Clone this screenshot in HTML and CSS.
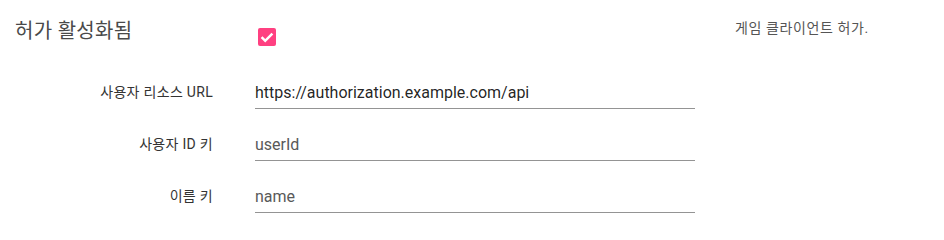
FILE: index.html
```html
<!DOCTYPE html>
<html lang="ko">
<head>
<meta charset="utf-8">
<link rel="stylesheet" href="styles.css">
</head>
<body>
<div class="form">
  <div class="row head">
    <div class="title">허가 활성화됨</div>
    <div class="cell">
      <span class="checkbox">
        <svg viewBox="0 0 18 18" width="18" height="18"><path d="M3.6 9.2 L7.2 12.8 L14.4 5.6" fill="none" stroke="#fff" stroke-width="2.5"/></svg>
      </span>
    </div>
    <div class="desc">게임 클라이언트 허가.</div>
  </div>
  <div class="row field">
    <label class="label">사용자 리소스 URL</label>
    <div class="cell"><div class="input">https://authorization.example.com/api</div></div>
  </div>
  <div class="row field">
    <label class="label">사용자 ID 키</label>
    <div class="cell"><div class="input muted">userId</div></div>
  </div>
  <div class="row field">
    <label class="label">이름 키</label>
    <div class="cell"><div class="input muted">name</div></div>
  </div>
</div>
</body>
</html>
```
FILE: styles.css
```css
html, body {
  margin: 0;
  padding: 0;
  background: #fff;
}
body {
  font-family: Roboto, "Noto Sans CJK KR", sans-serif;
  color: rgba(0, 0, 0, 0.87);
}
.form {
  padding-left: 15px;
}
.row {
  display: grid;
  grid-template-columns: 240px 480px 1fr;
}
.head {
  height: 57px;
}
.title {
  font-size: 20px;
  line-height: 26px;
  margin-top: 18px;
  letter-spacing: 0.3px;
  color: #4a4a4a;
}
.head .cell {
  padding-left: 3px;
  padding-top: 28px;
}
.checkbox {
  display: block;
  width: 18px;
  height: 18px;
  border-radius: 2px;
  background: #ff4081;
}
.checkbox svg {
  display: block;
}
.desc {
  font-size: 14px;
  line-height: 18px;
  margin-top: 19px;
  letter-spacing: 0.6px;
  color: #555;
}
.field {
  height: 52px;
  align-items: end;
}
.label {
  font-size: 14px;
  line-height: 19px;
  padding: 0 42px 7px 0;
  text-align: right;
  letter-spacing: 0.3px;
  color: #333;
}
.input {
  width: 440px;
  font-size: 16px;
  line-height: 19px;
  padding-bottom: 6px;
  border-bottom: 1px solid rgba(0, 0, 0, 0.42);
  color: rgba(0, 0, 0, 0.87);
}
.input.muted {
  color: #595959;
}
```
